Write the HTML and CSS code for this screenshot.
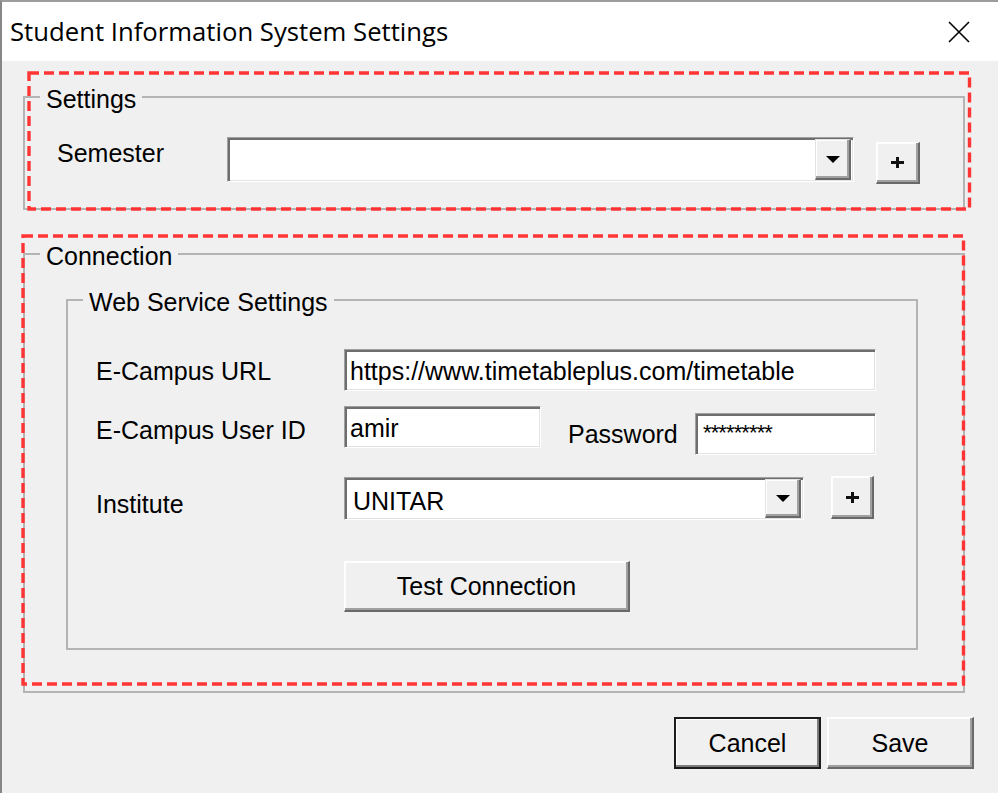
FILE: index.html
```html
<!DOCTYPE html>
<html lang="en">
<head>
  <meta charset="UTF-8" />
  <title>Student Information System Settings</title>
  <link rel="stylesheet" href="styles.css">
</head>
<body>
  <div class="window">
    <div class="titlebar">
      <span class="title">Student Information System Settings</span>
      <svg class="close" width="22" height="22" viewBox="0 0 22 22">
        <path d="M1 1 L21 21 M21 1 L1 21" stroke="#000" stroke-width="1.6" fill="none" />
      </svg>
    </div>

    <div class="content">
      <fieldset class="group group-settings">
        <legend>Settings</legend>
        <div class="group-body">
          <div class="row">
            <span class="lbl lbl-semester">Semester</span>
            <div class="combo combo-semester">
              <span class="combo-text"></span>
              <span class="drop">
                <svg width="14" height="7" viewBox="0 0 14 7"><polygon points="0,0 14,0 7,7" fill="#000" /></svg>
              </span>
            </div>
            <button class="btn btn-add btn-add-semester">
              <svg width="13" height="11" viewBox="0 0 13 11"><rect x="0" y="4" width="13" height="3" fill="#111" /><rect x="5" y="0" width="3" height="11" fill="#111" /></svg>
            </button>
          </div>
        </div>
      </fieldset>

      <fieldset class="group group-connection">
        <legend>Connection</legend>
        <div class="group-body">
          <fieldset class="group group-web">
            <legend>Web Service Settings</legend>
            <div class="group-body">

              <div class="row row-url">
                <span class="lbl lbl-wide">E-Campus URL</span>
                <div class="field field-url">https://www.timetableplus.com/timetable</div>
              </div>

              <div class="row row-user">
                <span class="lbl lbl-wide lbl-user">E-Campus User ID</span>
                <div class="field field-user">amir</div>
                <span class="lbl lbl-password">Password</span>
                <div class="field field-password"><span class="stars">*********</span></div>
              </div>

              <div class="row row-institute">
                <span class="lbl lbl-wide lbl-institute">Institute</span>
                <div class="combo combo-institute">
                  <span class="combo-text">UNITAR</span>
                  <span class="drop">
                    <svg width="14" height="7" viewBox="0 0 14 7"><polygon points="0,0 14,0 7,7" fill="#000" /></svg>
                  </span>
                </div>
                <button class="btn btn-add btn-add-institute">
                  <svg width="13" height="11" viewBox="0 0 13 11"><rect x="0" y="4" width="13" height="3" fill="#111" /><rect x="5" y="0" width="3" height="11" fill="#111" /></svg>
                </button>
              </div>

              <div class="row row-test">
                <button class="btn btn-test">Test Connection</button>
              </div>
            </div>
          </fieldset>
        </div>
      </fieldset>

      <div class="actions">
        <button class="btn btn-default">Cancel</button>
        <button class="btn">Save</button>
      </div>
    </div>
  </div>

  <!-- red annotation boxes drawn over the dialog -->
  <svg class="marks" width="998" height="793" viewBox="0 0 998 793">
    <rect x="29" y="73" width="940.5" height="136" />
    <rect x="23" y="236" width="940.5" height="448" />
  </svg>
</body>
</html>
```

FILE: styles.css
```css
* {
  box-sizing: border-box;
  margin: 0;
  padding: 0;
}

body {
  position: relative;
  margin: 0;
  font-family: 'Liberation Sans', Arial, sans-serif;
  font-size: 25px;
  line-height: 24px;
  color: #000;
  background: #f0f0f0;
}

.window {
  width: 998px;
  height: 793px;
  border-top: 2px solid #9d9d9d;
  border-left: 2px solid #878787;
  background: #f0f0f0;
  display: flex;
  flex-direction: column;
}

.titlebar {
  height: 59px;
  flex: none;
  background: #fff;
  display: flex;
  align-items: center;
  justify-content: space-between;
  padding: 0 28px 0 8px;
}

.title {
  font-family: 'Open Sans', 'Noto Sans', sans-serif;
  font-size: 25.7px;
  line-height: 30px;
  color: #000;
}

.close {
  display: block;
}

.content {
  flex: 1;
  padding: 21px 24px 0 21px;
}

/* group boxes */
.group {
  border: 2px solid #b4b4b4;
  min-width: 0;
  padding: 0;
}

.group legend {
  margin-left: 15px;
  padding: 5px 6px 0;
  line-height: 24px;
}

.group-settings,
.group-connection {
  margin-right: 9px;
}

.group-settings > .group-body {
  padding: 26px 0 24px 32px;
}

.group-connection {
  margin-top: 29px;
}

.group-connection > .group-body {
  padding: 17px 45px 41px 41px;
}

.group-web > .group-body {
  padding: 35px 0 36px 28px;
}

.row {
  display: flex;
  align-items: flex-start;
}

.lbl {
  white-space: nowrap;
}

.lbl-semester {
  width: 170px;
  margin-top: 4px;
}

.lbl-wide {
  width: 248px;
  margin-top: 10px;
}

.lbl-user {
  margin-top: 12px;
}

.lbl-institute {
  margin-top: 16px;
}

.lbl-password {
  width: 127px;
  margin-left: 27px;
  margin-top: 16px;
}

/* sunken text boxes */
.field,
.combo {
  background: #fff;
  border: 1px solid;
  border-color: #a0a0a0 #fff #fff #a0a0a0;
  box-shadow: inset 2px 2px #6e6e6e, inset -1px -1px #e3e3e3;
  height: 42px;
  white-space: nowrap;
  overflow: hidden;
}

.field {
  padding: 9px 5px 0;
}

.field-url {
  width: 532px;
}

.row-user {
  margin-top: 15px;
}

.field-user {
  width: 197px;
}

.field-password {
  width: 181px;
  margin-top: 7px;
  padding-top: 5px;
  padding-left: 7px;
}

.stars {
  font-size: 22px;
  letter-spacing: -0.9px;
}

/* combo boxes */
.combo {
  display: flex;
}

.combo-semester {
  width: 627px;
  height: 45px;
}

.combo-institute {
  width: 460px;
  height: 43px;
  margin-top: 1px;
}

.combo-text {
  flex: 1;
  padding: 11px 8px 0;
}

.drop {
  width: 36px;
  margin: 1px 2px 1px 0;
  background: #f0f0f0;
  border-style: solid;
  border-width: 1px 2px 2px 1px;
  border-color: #e3e3e3 #696969 #696969 #e3e3e3;
  box-shadow: inset -2px -2px #a0a0a0, inset 1px 1px #fff;
  display: flex;
  align-items: center;
  justify-content: center;
}

.drop svg {
  display: block;
}

/* raised buttons */
.btn {
  font-family: inherit;
  font-size: 25px;
  line-height: 24px;
  color: #000;
  background: #f0f0f0;
  border-style: solid;
  border-width: 1px 2px 2px 1px;
  border-color: #fff #696969 #696969 #fff;
  box-shadow: inset -2px -2px #a0a0a0, inset 1px 1px #fdfdfd;
  display: flex;
  align-items: center;
  justify-content: center;
  cursor: pointer;
}

.btn svg {
  display: block;
}

.btn-add-semester {
  width: 44px;
  height: 42px;
  margin-left: 22px;
  margin-top: 5px;
}

.row-institute {
  margin-top: 21px;
}

.btn-add-institute {
  width: 43px;
  height: 43px;
  margin-left: 27px;
}

.row-test {
  margin-top: 41px;
}

.btn-test {
  width: 286px;
  height: 51px;
  margin-left: 248px;
}

.actions {
  display: flex;
  justify-content: flex-end;
  gap: 6px;
  margin-top: 24px;
}

.actions .btn {
  width: 147px;
  height: 52px;
}

.btn-default {
  border: 2px solid #1c1c1c;
  box-shadow: inset -2px -2px #7c7c7c, inset 1px 1px #fff;
}

.marks {
  position: absolute;
  left: 0;
  top: 0;
  pointer-events: none;
}

.marks rect {
  fill: none;
  stroke: #ff3535;
  stroke-width: 3.4;
  stroke-dasharray: 10 5;
}
```
